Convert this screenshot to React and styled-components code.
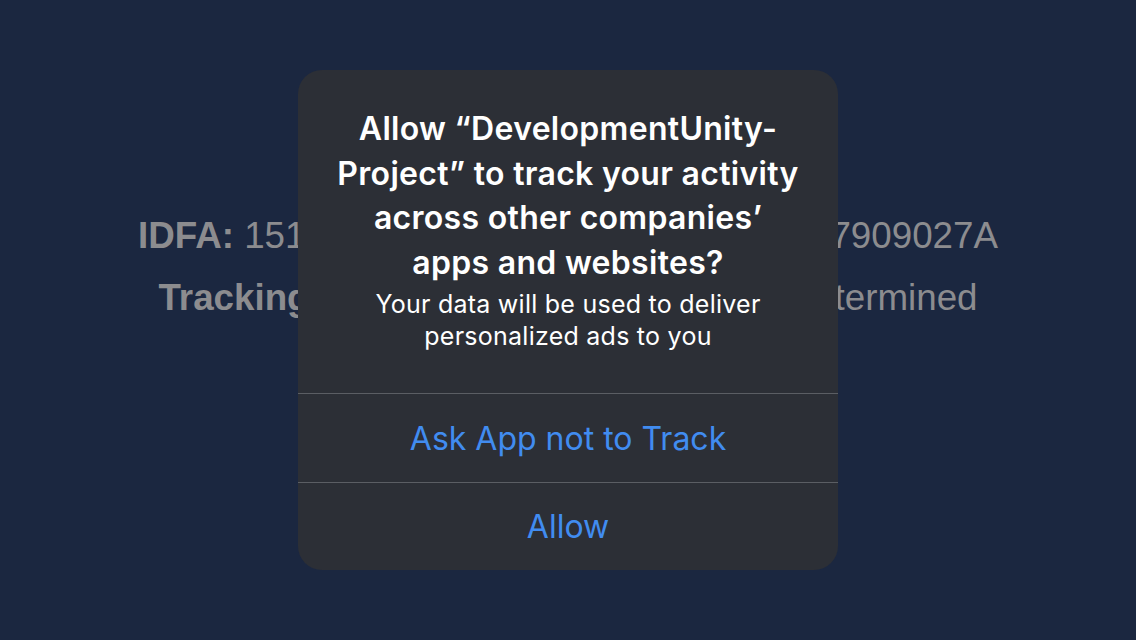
import React from 'react';
import styled, { createGlobalStyle } from 'styled-components';

const GlobalStyle = createGlobalStyle`
  html, body {
    margin: 0;
    padding: 0;
    background: #1b2740;
  }
  * {
    box-sizing: border-box;
  }
`;

const Screen = styled.div`
  position: relative;
  width: 1136px;
  height: 640px;
  overflow: hidden;
  background: #1b2740;
  display: flex;
  flex-direction: column;
  align-items: center;
  padding-top: 205px;
`;

const InfoLine = styled.div`
  font-family: "Liberation Sans", Arial, sans-serif;
  font-size: 36.75px;
  line-height: 62px;
  color: #8c8c8f;
  white-space: nowrap;
  word-spacing: ${p => p.$spread || 0}px;

  b {
    font-weight: 700;
  }
`;

const Overlay = styled.div`
  position: absolute;
  inset: 0;
  display: flex;
  align-items: center;
  justify-content: center;
`;

const Alert = styled.div`
  width: 540px;
  height: 500px;
  border-radius: 24px;
  background: #2c2f36;
  display: flex;
  flex-direction: column;
  overflow: hidden;
  font-family: Inter, "Noto Sans", sans-serif;
`;

const Body = styled.div`
  flex: 1;
  display: flex;
  flex-direction: column;
  align-items: center;
  padding-top: 37px;
  text-align: center;
`;

const Title = styled.div`
  color: #ffffff;
  font-size: 32px;
  font-weight: 600;
  line-height: 44.5px;
  letter-spacing: 0.3px;
`;

const Message = styled.div`
  color: #ffffff;
  font-size: 25px;
  font-weight: 400;
  line-height: 32px;
  letter-spacing: 0.25px;
  margin-top: 3px;
`;

const Action = styled.button`
  height: ${p => p.$h}px;
  width: 100%;
  border: none;
  border-top: 1px solid #5b5e64;
  background: transparent;
  color: #418cf0;
  font-family: Inter, "Noto Sans", sans-serif;
  font-size: 32px;
  font-weight: 400;
  cursor: pointer;
  padding: 0;
`;

export default function App() {
  return (
    <>
      <GlobalStyle />
      <Screen>
        <InfoLine><b>IDFA:</b> 1516F2A4-8C3D-4E6B-A1D9-C7B87909027A</InfoLine>
        <InfoLine $spread={5}><b>Tracking Authorization Status:</b> Not Determined</InfoLine>
        <Overlay>
          <Alert>
            <Body>
              <Title>
                Allow “DevelopmentUnity-<br />
                Project” to track your activity<br />
                across other companies’<br />
                apps and websites?
              </Title>
              <Message>
                Your data will be used to deliver<br />
                personalized ads to you
              </Message>
            </Body>
            <Action $h={89}>Ask App not to Track</Action>
            <Action $h={88}>Allow</Action>
          </Alert>
        </Overlay>
      </Screen>
    </>
  );
}
